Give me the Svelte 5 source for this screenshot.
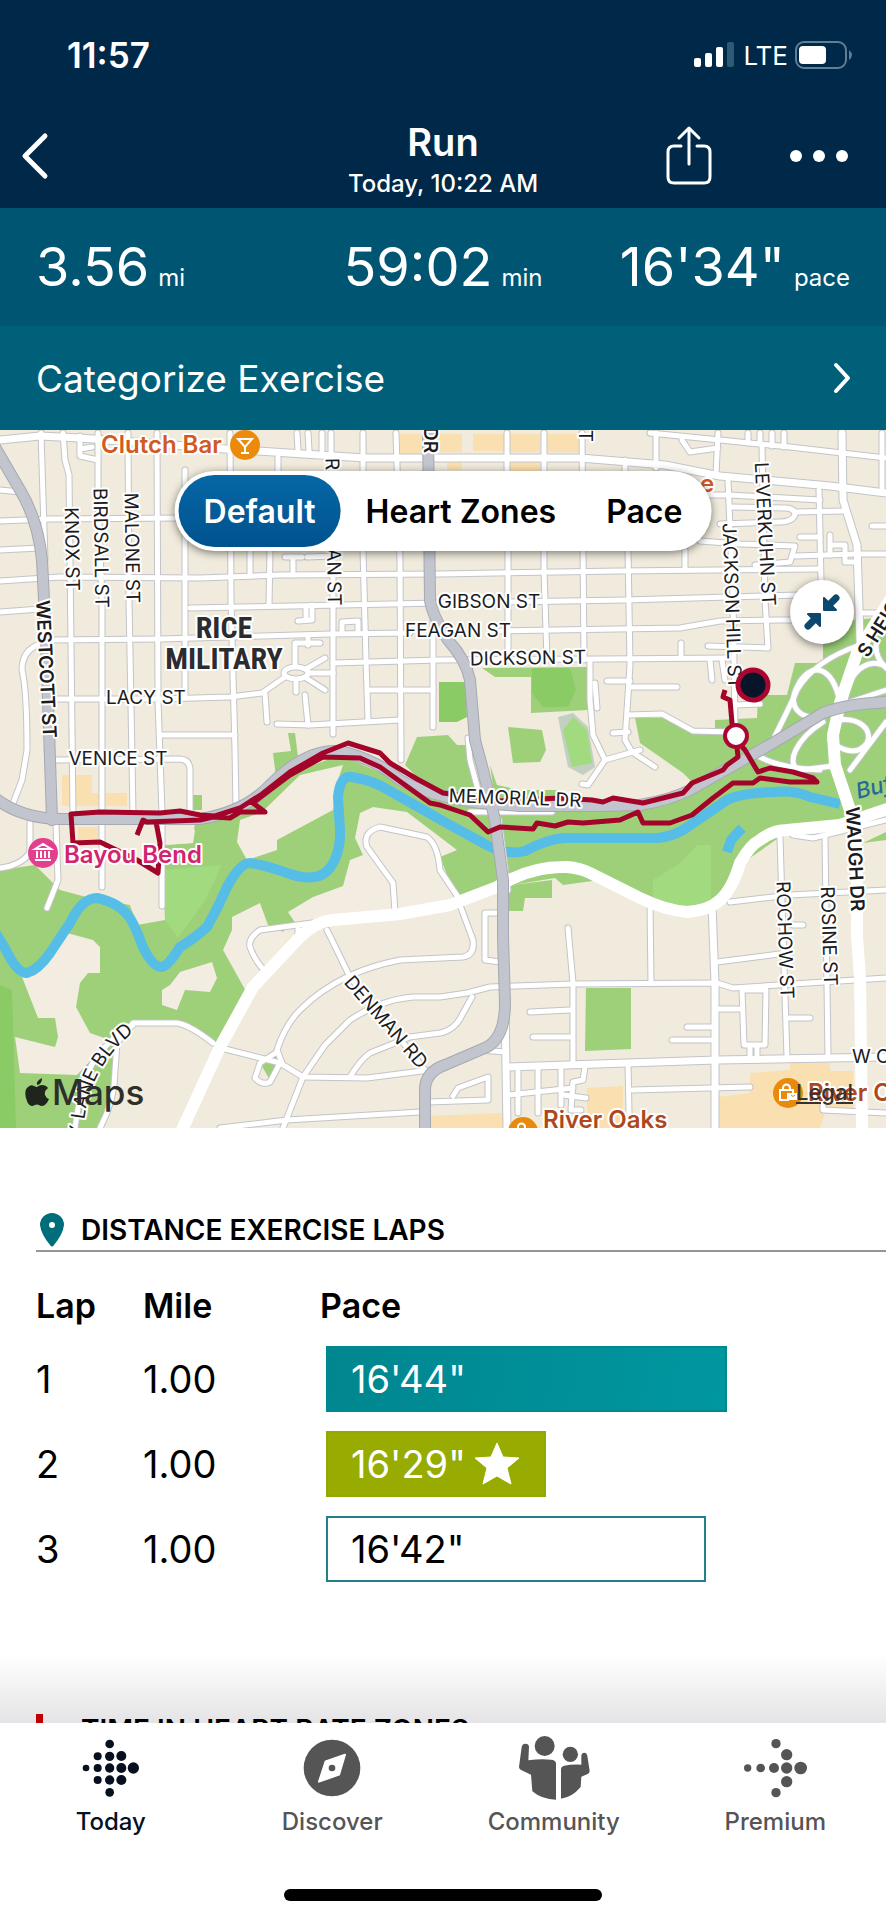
<script lang="ts">
  interface Lap {
    mile: string;
    pace: string;
    width: number;
    kind: 'slow' | 'best' | 'open';
  }

  interface Label {
    text: string;
    x: number;
    y: number;
    angle?: number;
    bold?: boolean;
  }

  type Dot = [number, number, number];

  const stats = [
    { value: '3.56', unit: 'mi' },
    { value: '59:02', unit: 'min' },
    { value: `16'34"`, unit: 'pace' },
  ];

  const modes = ['Default', 'Heart Zones', 'Pace'];
  let mode = $state('Default');

  const laps: Lap[] = [
    { mile: '1.00', pace: `16'44"`, width: 76.5, kind: 'slow' },
    { mile: '1.00', pace: `16'29"`, width: 42, kind: 'best' },
    { mile: '1.00', pace: `16'42"`, width: 72.5, kind: 'open' },
  ];

  const tabs = ['Today', 'Discover', 'Community', 'Premium'];
  let tab = $state('Today');

  const todayDots: Dot[] = [
    [256, 355, 10], [291, 320, 12], [291, 355, 12], [291, 391, 12],
    [327, 283, 13], [327, 320, 14], [327, 355, 14], [327, 391, 14], [327, 428, 13],
    [362, 319, 15], [362, 355, 15], [362, 391, 15], [398, 355, 17],
  ];

  const premiumDots: Dot[] = [
    [910, 355, 11], [949, 355, 13], [989, 355, 15], [1027, 355, 17], [1069, 355, 19],
    [995, 282, 14], [1027, 315, 17], [1027, 396, 17], [995, 429, 14],
  ];

  // land cover, back to front
  const parks = [
    'M0 870L35 865L60 890L90 898L130 905L137 925L165 920L163 870L165 845L193 843L195 820L240 815L300 770L340 755L420 790L480 810L560 806L650 803L720 775L886 700V815L790 830L740 865L715 905L687 912L640 898L590 873L567 867L530 870L497 887L450 905L287 925L220 1045L177 1023H133L113 1040L115 1070L100 1128H0Z',
    'M635 718H663L693 733H715V720L757 718L758 695H787L795 663H823V637L853 620L886 617V790H700L683 773L640 743Z',
    'M273 753L291 751L288 733H295L298 757L310 762L277 785Z',
    'M417 737L448 735L457 745H467L480 810L440 800L405 765Z',
    'M482 668L495 677H531V713L588 710V667Z',
    'M508 727L542 730L546 750L540 762L513 763Z',
    'M490 765L497 785L520 790H557V800H495Z',
    'M512 885L555 878L563 885L600 880L575 868L530 868L508 880V911H523L525 898H552V880Z',
    'M586 988H631V1049L585 1051Z',
    'M193 795H202V810H193Z',
    'M863 843L886 832V840Z',
    'M260 1063L276 1053L282 1063L270 1080Z',
  ];
  const darkParks = [
    'M439 682H466L467 717L457 722H439Z',
    'M532 668H570L576 690L568 707H543L532 693Z',
    'M0 985L12 990L16 1128H0Z',
  ];
  const lightParks = [
    'M653 880L680 863L697 845H711V900L687 907L653 898Z',
    'M563 730L573 717L587 730L592 763L572 767Z',
    'M165 870L222 865L205 900L178 938L165 920Z',
  ];
  const clearings = [
    'M360 813L373 807L407 812L457 850L440 857L457 900L300 930L288 912L313 897L343 886L350 860L363 855L355 838Z',
    'M240 820L262 812L300 775L343 765L338 780L333 810L277 840V850L247 860L237 842Z',
    'M232 930L223 950L247 993L290 935L268 925L260 903L232 917Z',
    'M180 972L212 962L217 978L210 992L185 990L177 1010L162 1005V990L170 985Z',
    'M67 933L93 940L100 947V973H88L80 983L76 1007L90 1033L110 1040L77 1075L20 1073L15 1037L55 1047L58 1037L55 1018H38L22 977Z',
    'M165 830H195L193 843L165 845Z',
  ];
  const shops = [
    'M62 775H92V793H127V806H62Z', 'M78 827H98V840H78Z', 'M400 434H422V454H400Z',
    'M436 434H462V452H436Z', 'M473 434H504V451H473Z', 'M510 434H540V452H510Z',
    'M547 434H580V452H547Z', 'M447 462H462V470H447Z', 'M510 462H540V472H510Z',
    'M587 1088L623 1086V1128H587Z', 'M428 1116L503 1113V1128H428Z',
    'M750 1073L790 1070V1063H830V1071H853V1110L825 1113L820 1128H718V1097L750 1093Z',
  ];

  const river =
    'M-5 932Q0 940 6 950Q17 973 27 973Q38 970 50 953L70 923Q82 898 97 898Q120 903 130 918Q137 930 142 945Q152 967 162 967Q168 966 180 947Q195 938 207 927Q218 908 227 887Q240 863 250 863Q265 865 287 873Q320 885 332 865Q341 850 340 830L338 797Q340 775 352 777Q370 780 383 787L450 825L483 843Q505 856 525 851Q545 840 563 838H657Q670 837 683 830L727 800Q740 793 773 792Q795 790 810 797L840 804';

  const streets = [
    // west grid
    'M41 433L45 560', 'M63 433L65 460L69 475L70 560L73 815', 'M98 433V500L102 600V887',
    'M128 433L129 600L133 813', 'M157 433L158 700L162 813V906', 'M185 470V697',
    'M230 433L231 600L235 750L236 805', 'M278 457V475', 'M270 550L269 605', 'M250 550V575',
    'M331 433V475', 'M333 550V734', 'M363 433V550L366 660L368 720', 'M396 433L400 560L401 760',
    'M433 620V727', 'M80 436V456L98 460', 'M80 449L92 447', 'M297 433L298 450', 'M308 433L309 450', 'M322 433V450',
    'M0 490L20 492', 'M0 521L50 519L180 518', 'M0 550L40 548',
    'M0 581L60 577L200 578L280 575L440 574L620 571L820 569', 'M0 612L40 609',
    'M190 608L440 603L625 600L800 595', 'M50 640L160 639L330 634L410 633',
    'M500 631L680 628L720 621L780 620H840', 'M333 663L440 660L600 659L730 658',
    'M55 699H160L230 697L262 693L285 677', 'M160 735H235', 'M370 690H433',
    'M277 724L310 725L400 720', 'M55 760L180 759Q190 760 190 770V813',
    'M50 642Q22 645 22 670Q27 690 27 750L22 780L12 806',
    'M284 673A12 6 0 1 0 308 673A12 6 0 1 0 284 673', 'M295 665V643H320', 'M308 673H333',
    'M306 669L325 658', 'M306 678L325 690', 'M296 680V692', 'M308 635V645', 'M305 695L308 725',
    'M265 694L267 722', 'M298 621L312 620V605', 'M306 607V620', 'M342 633V622L358 621V632',
    'M285 557H302M293 557V575', 'M307 557L333 556',
    // north east grid
    'M507 433V470', 'M508 550V660', 'M544 433V570L547 660', 'M582 433L584 660',
    'M590 660V700L593 735L605 760L640 750', 'M605 760L588 785L582 784', 'M625 460V490',
    'M628 550L630 665L625 740L632 752L655 767', 'M656 433V468', 'M685 550V570',
    'M718 433L716 475', 'M728 480L733 600L735 728', 'M762 445L765 600L768 648L708 646',
    'M819 490L821 580', 'M882 433V490', 'M748 433V443M760 433V444M772 433V446M784 433V447',
    'M650 433L720 440L790 447L886 458', 'M682 440L690 452L718 448', 'M700 495H730L820 500',
    'M730 507L785 508Q795 508 795 515Q792 522 780 522L720 524', 'M795 512L843 511',
    'M700 541L740 544L795 546L790 562L755 565', 'M800 537H820', 'M795 556L857 554H886',
    'M830 535V555M830 545H845V562H857', 'M872 526H886', 'M860 613H886', 'M681 643V658', 'M710 660L712 680',
    'M722 660L725 680', 'M607 681H630', 'M630 687H677', 'M628 715L662 714L693 731L735 732',
    'M613 733L628 732', 'M595 683L597 708', 'M735 705L760 704',
    // parkway ramps
    'M840 703C833 665 810 660 797 687C787 707 800 720 823 717', 'M845 700C850 665 875 655 890 670',
    'M886 690L850 702', 'M837 720C860 717 873 730 867 743C857 757 840 750 830 740',
    'M823 722C795 740 785 765 800 770L833 766', 'M773 740Q793 700 797 690Q815 660 860 645',
    'M886 722L850 770', 'M760 757Q780 768 820 770', 'M877 640Q873 655 886 668',
    'M793 835L813 838L886 820', 'M468 738L470 760L478 790', 'M470 812L552 812',
    // south west
    'M30 823V853Q20 866 0 868', 'M56 825L58 880L47 908',
    'M395 912L393 883L367 847Q362 832 380 827L427 837Q438 845 440 870L460 900',
    'M312 923L260 930Q248 938 250 947Q255 962 267 973', 'M298 928V940',
    'M327 930L350 977L425 1070',
    'M282 1063L277 1050Q285 1025 300 1010Q320 990 347 977Q370 966 400 960L463 957Q475 955 473 940L460 905',
    'M283 1128L303 1077L325 1045L350 1020Q380 1000 413 997L440 997L467 993L490 987L573 984L717 983L733 988L886 978',
    'M350 1077Q360 1060 370 1053L410 1037L440 1033Q455 1030 462 1015L472 997',
    'M225 1049L280 1063L303 1077L367 1078L430 1070',
    'M277 1052L260 1063L255 1078Q262 1086 270 1082L280 1063',
    'M213 1043Q190 1025 177 1023H133L117 1043L115 1070Q115 1100 100 1128',
    'M133 1025Q90 1050 80 1095L75 1128', 'M220 1128L287 1120L420 1112',
    'M428 1102L488 1100V1077L458 1088L453 1096',
    // south east
    'M498 913H485V960L500 962', 'M568 928L573 983V1063', 'M650 903L651 983',
    'M730 902L790 895L886 890', 'M717 962L787 953', 'M780 837L782 903L787 1057',
    'M825 837L828 1057', 'M530 1012L570 1010', 'M533 1037H570', 'M687 1027H713',
    'M672 1040H713', 'M628 1063L629 1113', 'M632 1090L750 1087', 'M717 1009H742',
    'M742 990L744 1045H765L766 990Z', 'M787 1018H810', 'M793 925H803', 'M750 1047V1060M757 1047V1060',
    'M508 1095L573 1088', 'M518 1067V1113', 'M538 1067V1113', 'M561 1067V1105',
    'M585 1067L583 1080L573 1082L571 1110H581', 'M563 1095L586 1098', 'M480 1050L505 1052', 'M823 1100V1110L886 1113',
  ];

  const avenues = [
    'M0 440L40 436L80 438L225 449L365 458H580L665 465L720 476L830 486L886 493',
    'M842 433L843 500L857 545L860 640', 'M712 905L715 983V1128',
    'M507 1067L627 1063L717 1060L886 1057', 'M505 1005L507 1128', 'M498 820L507 890',
  ];

  const boulevards = [
    'M182 1130L220 1047L253 987L300 937Q315 922 333 920L400 914L450 905L497 887Q530 866 567 867Q580 868 590 873L640 898Q665 910 687 912Q710 910 720 900Q732 890 740 863Q750 845 760 840Q773 830 787 830L840 825L890 808',
    'M890 600L857 653L840 703L833 735L835 765L850 810L857 853V937L860 977L862 1130',
  ];

  const highways = [
    'M-5 447L20 490Q38 520 42 560L46 640L52 820',
    'M428 430L430 600Q432 615 448 640Q466 660 470 680L475 740L483 770L495 820L503 880V937L505 1003Q505 1037 487 1047L445 1065Q425 1072 425 1090V1130',
    'M-5 798Q20 818 60 819H200Q245 812 270 785Q310 745 345 752Q380 762 400 780Q430 796 480 803L520 806H600L640 805Q670 800 690 790L773 743L823 713Q850 703 890 702',
  ];

  const route =
    'M725 690L723 697L730 700L732 723L736 737L738 757L727 765L723 770L692 783L683 793L643 803L613 798L603 802L592 800L560 798L500 801L443 793L417 779L390 763L380 753L348 743L323 753L290 772L262 794L240 808L215 816L200 815L180 811L160 813L100 812L71 814L73 843L100 842L137 860L158 873L160 843L156 822M137 835L143 820L147 822L200 820L213 817L230 818L240 812L265 812L253 803L262 796L290 775L323 757L360 758L380 767L430 803L440 805L470 815L488 832L500 827L533 829L537 823L555 826L568 822L583 823L620 820L638 812L643 823H670L692 815L713 798L733 783H753L760 778L790 782H817L813 778L793 772L770 768L758 772L745 750L738 742';

  const labels: Label[] = [
    { text: 'KNOX ST', x: 72, y: 549, angle: 89 },
    { text: 'BIRDSALL ST', x: 101, y: 548, angle: 89 },
    { text: 'MALONE ST', x: 132, y: 548, angle: 89 },
    { text: 'WESTCOTT ST', x: 46, y: 669, angle: 87, bold: true },
    { text: 'LACY ST', x: 146, y: 697 },
    { text: 'VENICE ST', x: 118, y: 758 },
    { text: 'GIBSON ST', x: 489, y: 601 },
    { text: 'FEAGAN ST', x: 458, y: 630 },
    { text: 'DICKSON ST', x: 528, y: 658, angle: -1 },
    { text: 'R', x: 332, y: 464, angle: 89 },
    { text: 'AN ST', x: 334, y: 577, angle: 89 },
    { text: 'DR', x: 430, y: 440, angle: 90, bold: true },
    { text: 'T', x: 585, y: 436, angle: 90 },
    { text: 'JACKSON HILL ST', x: 732, y: 606, angle: 88 },
    { text: 'LEVERKUHN ST', x: 765, y: 534, angle: 87 },
    { text: 'S HEIGHTS', x: 889, y: 612, angle: -58, bold: true },
    { text: 'MEMORIAL DR', x: 515, y: 798, angle: 2 },
    { text: 'WAUGH DR', x: 855, y: 859, angle: 87, bold: true },
    { text: 'ROCHOW ST', x: 785, y: 940, angle: 88 },
    { text: 'ROSINE ST', x: 829, y: 936, angle: 88 },
    { text: 'DENMAN RD', x: 386, y: 1022, angle: 49 },
    { text: 'W C', x: 871, y: 1056 },
  ];
</script>

{#snippet bag(x: number, y: number)}
  <g transform="translate({x} {y})">
    <circle r="15" fill="#ea8a0c" />
    <path d="M-8 -3H5V1H0V7H-8ZM-5 -3V-5A3 3 0 0 1 2 -5V-3" fill="none" stroke="#fff" stroke-width="2" />
    <path d="M1 0H9V7H1Z" fill="#fff" />
    <path d="M3 2Q5 5 7 2" fill="none" stroke="#ea8a0c" />
  </g>
{/snippet}

<div class="app">
  <main>
    <header class="top">
      <div class="status">
        <span class="time">11:57</span>
        <div class="signals">
          <svg width="42" height="26" viewBox="0 0 42 26" aria-hidden="true">
            <rect x="0" y="16" width="7" height="9" rx="2" fill="#fff" />
            <rect x="11" y="11" width="7" height="14" rx="2" fill="#fff" />
            <rect x="22" y="5" width="7" height="20" rx="2" fill="#fff" />
            <rect x="33" y="0" width="7" height="25" rx="2" fill="#2b5b75" />
          </svg>
          <span class="carrier">LTE</span>
          <svg width="58" height="28" viewBox="0 0 58 28" aria-hidden="true">
            <rect x="1" y="1" width="50" height="26" rx="8" fill="none" stroke="#5f7f96" stroke-width="2" />
            <rect x="4" y="5" width="27" height="18" rx="4" fill="#fff" />
            <path d="M54 9Q60 14 54 19Z" fill="#5f7f96" />
          </svg>
        </div>
      </div>
      <div class="title-row">
        <button class="icon-button" aria-label="Back">
          <svg width="28" height="48" viewBox="0 0 28 48">
            <path d="M24 4L4 24L24 44" fill="none" stroke="#fff" stroke-width="5" stroke-linecap="round" stroke-linejoin="round" />
          </svg>
        </button>
        <div class="title">
          <h1>Run</h1>
          <p>Today, 10:22 AM</p>
        </div>
        <div class="actions">
          <button class="icon-button" aria-label="Share">
            <svg width="46" height="60" viewBox="0 0 46 60">
              <g fill="none" stroke="#fff" stroke-width="3" stroke-linecap="round" stroke-linejoin="round">
                <path d="M15 20H8Q2 20 2 26V51Q2 57 8 57H38Q44 57 44 51V26Q44 20 38 20H31" />
                <path d="M23 38V3M13 12L23 2L33 12" />
              </g>
            </svg>
          </button>
          <button class="icon-button" aria-label="More">
            <svg width="62" height="14" viewBox="0 0 62 14" fill="#fff">
              <circle cx="8" cy="7" r="6" />
              <circle cx="31" cy="7" r="6" />
              <circle cx="54" cy="7" r="6" />
            </svg>
          </button>
        </div>
      </div>
    </header>

    <section class="stats">
      {#each stats as stat}
        <div class="stat">
          <span class="stat-value">{stat.value}</span>
          <span class="stat-unit">{stat.unit}</span>
        </div>
      {/each}
    </section>

    <button class="categorize">
      <span>Categorize Exercise</span>
      <svg width="20" height="34" viewBox="0 0 20 34" aria-hidden="true">
        <path d="M4 4L16 17L4 30" fill="none" stroke="#fff" stroke-width="4" stroke-linecap="round" stroke-linejoin="round" />
      </svg>
    </button>

    <section class="map">
      <svg class="map-canvas" viewBox="0 430 886 698" preserveAspectRatio="xMidYMid slice">
        <rect y="430" width="886" height="698" fill="#f0ebdc" />
        <path d="M558 717L573 713L588 727L595 767L583 775L568 767Z" fill="#c3cfc2" />
        {#each parks as d}<path {d} fill="#9ed07a" />{/each}
        {#each darkParks as d}<path {d} fill="#8acb66" />{/each}
        {#each lightParks as d}<path {d} fill="#a2da80" />{/each}
        {#each clearings as d}<path {d} fill="#f2ece1" />{/each}
        {#each shops as d}<path {d} fill="#fae0b0" />{/each}

        <path class="water" d={river} />
        <path class="water" d="M727 852L731 840L742 828" />

        <g class="roads casing">
          {#each streets as d}<path {d} class="street" />{/each}
          {#each avenues as d}<path {d} class="avenue" />{/each}
        </g>
        <g class="roads">
          {#each streets as d}<path {d} class="street" />{/each}
          {#each avenues as d}<path {d} class="avenue" />{/each}
          {#each boulevards as d}<path {d} class="boulevard" />{/each}
        </g>
        <g class="roads">
          {#each highways as d}<path {d} class="highway-edge" />{/each}
          {#each highways as d}<path {d} class="highway" />{/each}
        </g>

        <path class="route" d={route} />

        {#each labels as label}
          <text
            class="street-label"
            class:bold={label.bold}
            x={label.x}
            y={label.y}
            transform="rotate({label.angle ?? 0} {label.x} {label.y})">{label.text}</text>
        {/each}
        <path id="lane" d="M83 1138Q84 1066 142 1026" fill="none" />
        <text class="along-label"><textPath href="#lane">Y LANE BLVD</textPath></text>
        <text class="area" x="224" y="638">RICE</text>
        <text class="area" x="224" y="669">MILITARY</text>
        <text class="water-label" x="858" y="799" transform="rotate(-14 858 799)">Buf</text>

        <text class="place orange" x="101" y="453">Clutch Bar</text>
        <circle cx="245" cy="445" r="15" fill="#ec8a0c" />
        <path d="M238 439H252L245 447ZM245 446V453M241 453H249" fill="none" stroke="#fff" stroke-width="2" />
        <text class="place orange" x="700" y="492">e</text>

        <text class="place pink" x="64" y="863">Bayou Bend</text>
        <circle cx="43" cy="853" r="15" fill="#e2408f" />
        <path d="M35 849L43 844L51 849ZM37 851V858M41 851V858M45 851V858M49 851V858M35 860H51" fill="none" stroke="#fff" stroke-width="2" />

        <text class="place rust" x="543" y="1128">River Oaks</text>
        {@render bag(523, 1132)}
        <text class="place rust" x="808" y="1101">River Oaks</text>
        {@render bag(788, 1093)}

        <circle cx="753" cy="685" r="15" fill="#081528" stroke="#ad0531" stroke-width="5" />
        <circle cx="736" cy="736" r="11" fill="#fff" stroke="#ad0531" stroke-width="4" />
      </svg>

      <div class="modes" role="group" aria-label="Map overlay">
        {#each modes as name}
          <button class="mode" class:selected={mode === name} aria-pressed={mode === name} onclick={() => (mode = name)}>
            {name}
          </button>
        {/each}
      </div>

      <button class="shrink" aria-label="Collapse map">
        <svg width="36" height="36" viewBox="0 0 36 36">
          <path d="M32 4L26 10M4 32L10 26" stroke="#0b486f" stroke-width="7" stroke-linecap="round" />
          <path d="M20 4V16H32ZM4 20H16V32Z" fill="#0b486f" stroke="#0b486f" stroke-width="2" stroke-linejoin="round" />
        </svg>
      </button>

      <div class="brand">
        <svg width="24" height="28" viewBox="0 0 24 28" aria-hidden="true">
          <path d="M17 0Q17 6 12 7Q11 3 17 0Z" />
          <path d="M12 9Q14 7 17 7Q21 7 23 10Q19 13 20 17Q21 20 24 21Q21 28 17 28Q15 28 14 27Q12 26 10 27Q8 28 7 28Q3 28 1 20Q-1 12 3 9Q6 6 9 8Q11 9 12 9Z" />
        </svg>
        <span>Maps</span>
      </div>
      <a class="legal" href="#legal">Legal</a>
    </section>

    <section class="laps">
      <h2>
        <svg width="32" height="34" viewBox="0 0 32 34" aria-hidden="true">
          <path d="M16 0A12 12 0 0 1 28 12Q27 21 18 32Q16 35 14 32Q5 21 4 12A12 12 0 0 1 16 0Z" fill="#006d7a" />
          <circle cx="16" cy="12" r="3" fill="#fff" />
        </svg>
        DISTANCE EXERCISE LAPS
      </h2>
      <table>
        <thead>
          <tr>
            <th class="col-lap">Lap</th>
            <th class="col-mile">Mile</th>
            <th>Pace</th>
          </tr>
        </thead>
        <tbody>
          {#each laps as lap, i}
            <tr>
              <td>{i + 1}</td>
              <td>{lap.mile}</td>
              <td>
                <div class="track">
                  <div class="bar {lap.kind}" style:width="{lap.width}%">
                    {lap.pace}
                    {#if lap.kind === 'best'}
                      <svg width="46" height="44" viewBox="0 0 46 44" aria-label="Best lap">
                        <path d="M23 1L29 15L45 16L33 26L37 42L23 34L9 42L13 26L1 16L17 15Z" fill="#fff" stroke="#fff" stroke-linejoin="round" />
                      </svg>
                    {/if}
                  </div>
                </div>
              </td>
            </tr>
          {/each}
        </tbody>
      </table>
    </section>

    <section class="zones">
      <h2>
        <svg width="32" height="34" viewBox="0 0 32 34" aria-hidden="true">
          <path d="M-3 1H7V34H-3Z" fill="#c00000" />
        </svg>
        TIME IN HEART RATE ZONES
      </h2>
    </section>
  </main>

  <nav>
    <div class="tabs">
      {#each tabs as name}
        <button class="tab" class:active={tab === name} onclick={() => (tab = name)}>
          {#if name === 'Today'}
            <svg width="60" height="70" viewBox="241 250 180 210">
              {#each todayDots as [cx, cy, r]}<circle {cx} {cy} {r} />{/each}
            </svg>
          {:else if name === 'Discover'}
            <svg width="60" height="70" viewBox="907 250 180 210">
              <circle cx="997" cy="355" r="85" />
              <path d="M1036 315L1018 375L958 396L978 335Z" fill="#fff" stroke="#fff" stroke-width="6" stroke-linejoin="round" />
              <circle cx="997" cy="355" r="10" />
            </svg>
          {:else if name === 'Community'}
            <svg width="74" height="70" viewBox="220 250 222 210">
              <circle cx="303" cy="289" r="30" />
              <circle cx="380" cy="314" r="23" />
              <path d="M245 282q-9 0-11 10L226 352q0 5 5 8L262 375L266 425Q295 450 337 450V340Q335 331 322 330Q290 327 254 332L256 292q0-10-11-10Z" />
              <path d="M422 309q-9 0-9 11L413 345Q380 344 362 348Q352 350 352 360V447Q385 443 411 412L413 381L432 373q6-3 6-9L431 318q-2-9-9-9Z" />
            </svg>
          {:else}
            <svg width="66" height="70" viewBox="893 250 198 210">
              {#each premiumDots as [cx, cy, r]}<circle {cx} {cy} {r} />{/each}
            </svg>
          {/if}
          <span>{name}</span>
        </button>
      {/each}
    </div>
    <div class="home-indicator"></div>
  </nav>
</div>

<style>
  :global(body) {
    background: #fff;
  }

  .app {
    display: flex;
    flex-direction: column;
    height: 100vh;
    font-family: Inter, Roboto, 'Liberation Sans', sans-serif;
    color: #000;
  }

  main {
    flex: 1;
    min-height: 0;
    overflow-y: auto;
    scrollbar-width: none;
  }

  button {
    padding: 0;
    border: 0;
    background: none;
    color: inherit;
    font: inherit;
    cursor: pointer;
  }

  svg {
    display: block;
    flex-shrink: 0;
  }

  h1,
  h2,
  p {
    margin: 0;
  }

  .top {
    background: #002848;
    color: #fff;
  }

  .status {
    display: flex;
    justify-content: space-between;
    align-items: center;
    height: 110px;
    padding: 0 33px 0 67px;
  }

  .time {
    font-size: 35px;
    font-weight: 600;
  }

  .signals {
    display: flex;
    align-items: center;
    gap: 7px;
  }

  .carrier {
    font-size: 26px;
    font-weight: 400;
  }

  .title-row {
    display: grid;
    grid-template-columns: 1fr auto 1fr;
    align-items: center;
    height: 92px;
    padding: 0 36px 6px 21px;
  }

  .title {
    padding: 6px 0 0 15px;
    text-align: center;
  }

  h1 {
    font-size: 38px;
    line-height: 44px;
    font-weight: 600;
    margin-bottom: 6px;
  }

  .title p {
    font-size: 24px;
    line-height: 28px;
    font-weight: 500;
  }

  .actions {
    display: flex;
    justify-content: flex-end;
    align-items: center;
    gap: 76px;
  }

  .stats {
    display: grid;
    grid-template-columns: 1fr auto 1fr;
    padding: 25px 36px;
    background: #005572;
    color: #fff;
  }

  .stat {
    display: flex;
    align-items: baseline;
    gap: 9px;
  }

  .stat:last-child {
    justify-content: flex-end;
  }

  .stat-value {
    font-size: 54px;
    line-height: 68px;
  }

  .stat-unit {
    font-size: 24px;
    line-height: 28px;
  }

  .categorize {
    display: flex;
    justify-content: space-between;
    align-items: center;
    width: 100%;
    height: 104px;
    padding: 0 34px 0 36px;
    background: #006079;
    color: #fff;
    font-size: 37px;
  }

  .map {
    position: relative;
    aspect-ratio: 886 / 698;
    overflow: hidden;
  }

  .map-canvas {
    width: 100%;
    height: 100%;
  }

  .water {
    fill: none;
    stroke: #56bde6;
    stroke-width: 10;
    stroke-linejoin: round;
  }

  .roads path {
    fill: none;
    stroke: #fff;
    stroke-linecap: round;
    stroke-linejoin: round;
  }

  .roads .street {
    stroke-width: 5;
  }

  .roads .avenue {
    stroke-width: 7;
  }

  .roads .boulevard {
    stroke-width: 12;
  }

  .casing .street {
    stroke: #c3c4c9;
    stroke-width: 7;
  }

  .casing .avenue {
    stroke: #c3c4c9;
    stroke-width: 9;
  }

  .roads .highway-edge {
    stroke: #a6a9b1;
    stroke-width: 12;
  }

  .roads .highway {
    stroke: #c3c5ce;
    stroke-width: 10;
  }

  .route {
    fill: none;
    stroke: #a30429;
    stroke-width: 5;
    stroke-linejoin: round;
  }

  text {
    paint-order: stroke;
    stroke: #fff;
    stroke-width: 4px;
    stroke-linejoin: round;
  }

  .street-label {
    fill: #1c1c1e;
    font-size: 19px;
    text-anchor: middle;
    dominant-baseline: central;
  }

  .street-label.bold {
    font-weight: 600;
  }

  .along-label {
    fill: #1c1c1e;
    font-size: 19px;
  }

  .area {
    fill: #2c2c30;
    font-family: 'Liberation Sans Narrow', 'Roboto Condensed', Roboto, sans-serif;
    font-size: 30px;
    font-weight: 700;
    text-anchor: middle;
  }

  .water-label {
    fill: #28699c;
    stroke: none;
    font-size: 22px;
    font-style: italic;
    font-weight: 500;
  }

  .place {
    font-size: 24px;
    font-weight: 600;
  }

  .orange {
    fill: #cf5a23;
  }

  .pink {
    fill: #d3246f;
  }

  .rust {
    fill: #ae481c;
  }

  .modes {
    position: absolute;
    top: 41px;
    left: 50%;
    display: flex;
    padding: 4px;
    border-radius: 40px;
    background: #fff;
    box-shadow: 0 2px 8px rgba(0, 0, 0, 0.5);
    transform: translateX(-50%);
  }

  .mode {
    height: 72px;
    padding: 0 25px;
    border-radius: 36px;
    font-size: 32px;
    font-weight: 600;
    white-space: nowrap;
  }

  .mode.selected {
    background: linear-gradient(#0667a5, #00528f);
    color: #fff;
  }

  .shrink {
    position: absolute;
    top: 150px;
    right: 32px;
    display: grid;
    place-items: center;
    width: 64px;
    height: 64px;
    border-radius: 50%;
    background: #fff;
    box-shadow: 0 2px 8px rgba(0, 0, 0, 0.5);
  }

  .brand {
    position: absolute;
    bottom: 16px;
    left: 25px;
    display: flex;
    align-items: center;
    gap: 3px;
    color: #2d2f2b;
    fill: #1f241c;
    font-size: 35px;
    line-height: 40px;
    font-weight: 500;
  }

  .legal {
    position: absolute;
    right: 33px;
    bottom: 22px;
    color: #333;
    font-size: 22px;
    line-height: 28px;
    font-weight: 500;
  }

  .laps {
    padding: 85px 0 64px 36px;
  }

  h2 {
    display: flex;
    align-items: center;
    gap: 13px;
    font-size: 28px;
    line-height: 34px;
    font-weight: 600;
  }

  .laps h2 {
    padding-bottom: 3px;
    border-bottom: 2px solid #969696;
  }

  table {
    width: 100%;
    table-layout: fixed;
    border-collapse: collapse;
  }

  th {
    padding: 32px 0 8px;
    font-size: 34px;
    line-height: 44px;
    font-weight: 600;
    text-align: left;
  }

  .col-lap {
    width: 107px;
  }

  .col-mile {
    width: 177px;
  }

  td {
    height: 85px;
    padding: 0;
    font-size: 38px;
  }

  .track {
    padding: 0 36px 0 6px;
  }

  .bar {
    display: flex;
    align-items: center;
    gap: 8px;
    box-sizing: border-box;
    height: 66px;
    padding-left: 23px;
    border: 2px solid transparent;
    white-space: nowrap;
  }

  .slow {
    border-color: #008890;
    background: linear-gradient(100deg, #00868f, #0097a1);
    color: #fff;
  }

  .best {
    border-color: #93a800;
    background: #97ab00;
    color: #fff;
  }

  .open {
    border-color: #22808c;
  }

  .zones {
    padding: 58px 36px;
    background: linear-gradient(#fff, #e4e4e6 68px);
  }

  .tabs {
    display: grid;
    grid-template-columns: repeat(4, 1fr);
  }

  nav {
    padding: 10px 0 19px;
    background: #fff;
  }

  .tab {
    display: flex;
    flex-direction: column;
    align-items: center;
    gap: 5px;
    color: #555;
    fill: #555;
    font-size: 24px;
    line-height: 28px;
    font-weight: 500;
  }

  .tab.active {
    color: #06101f;
    fill: #06101f;
  }

  .home-indicator {
    width: 36%;
    height: 12px;
    margin: 53px auto 0;
    border-radius: 6px;
    background: #000;
  }
</style>
